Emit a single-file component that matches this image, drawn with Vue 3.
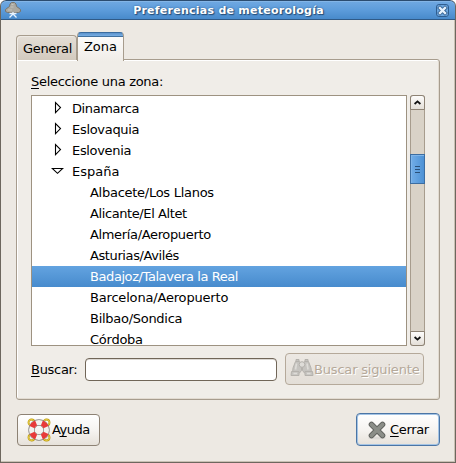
<script setup>
const countries = [
  { name: 'Dinamarca', open: false, tracking: -0.4 },
  { name: 'Eslovaquia', open: false, tracking: -0.3 },
  { name: 'Eslovenia', open: false, tracking: -0.33 },
  { name: 'España', open: true, tracking: 0 },
]
const stations = [
  { name: 'Albacete/Los Llanos', tracking: -0.27 },
  { name: 'Alicante/El Altet', tracking: -0.4 },
  { name: 'Almería/Aeropuerto', tracking: -0.35 },
  { name: 'Asturias/Avilés', tracking: -0.4 },
  { name: 'Badajoz/Talavera la Real', tracking: -0.42 },
  { name: 'Barcelona/Aeropuerto', tracking: -0.18 },
  { name: 'Bilbao/Sondica', tracking: -0.28 },
  { name: 'Córdoba', tracking: -0.25 },
]
const selected = 'Badajoz/Talavera la Real'
</script>

<template>
  <div class="window">
    <header class="titlebar">
      <svg class="app-icon" width="18" height="18" viewBox="0 0 18 18">
        <path d="M1.500 10.500v-2L4 6.500 5.500 5.500 6 3 7.500 1.500h3L12 3l.5 2.500L14 6.500l2.500 2v2l-2 1h-11z" fill="#aaa9a2" stroke="#77756f" />
        <path d="M7.500 3.500h2M6.500 6h3M4 9h4" stroke="#c4c3bd" />
        <path d="M9 11v3M5.500 12.500h7M9 13L5.500 16.500M9 13l3.500 3.500" fill="none" stroke="#e9f4ff" stroke-width="1.300" />
      </svg>
      <span class="title">Preferencias de meteorología</span>
      <svg class="close" width="15" height="15" viewBox="0 0 15 15">
        <rect x="1.500" y="1.500" width="12" height="12" rx="2.500" fill="#6ba5de" stroke="#2f5e90" />
        <path d="M5 5l5 5M10 5l-5 5" stroke="#315f8f" stroke-width="4" stroke-linecap="square" />
        <path d="M5 5l5 5M10 5l-5 5" stroke="#e6f2fd" stroke-width="2.400" stroke-linecap="square" />
      </svg>
    </header>

    <main class="body">
      <nav class="tabs">
        <div class="tab general"><span>General</span></div>
        <div class="tab zona"><span>Zona</span></div>
      </nav>
      <section class="panel">
        <label class="caption"><u>S</u>eleccione una zona:</label>
        <div class="picker">
          <div class="tree">
            <div v-for="c in countries" :key="c.name" class="row">
              <svg class="arrow" width="13" height="14" viewBox="0 0 13 14">
                <path v-if="c.open" d="M1.300 4.500h10.400L6.500 9.300z" fill="#fff" stroke="#000" stroke-width="1.100" />
                <path v-else d="M4.500 1.500v10.200l5-5.100z" fill="#fff" stroke="#000" stroke-width="1.100" />
              </svg>
              <span :style="{ letterSpacing: c.tracking + 'px' }">{{ c.name }}</span>
            </div>
            <div v-for="s in stations" :key="s.name" class="row station" :class="{ selected: s.name === selected }">
              <span :style="{ letterSpacing: s.tracking + 'px' }">{{ s.name }}</span>
            </div>
          </div>
          <div class="scrollbar">
            <div class="step up">
              <svg width="13" height="13" viewBox="0 0 13 13"><path d="M3.600 8L6.500 5.400 9.400 8" fill="none" stroke="#111" stroke-width="1.800" /></svg>
            </div>
            <div class="thumb"><i></i><i></i><i></i></div>
            <div class="step down">
              <svg width="13" height="13" viewBox="0 0 13 13"><path d="M3.600 5L6.500 7.600 9.400 5" fill="none" stroke="#111" stroke-width="1.800" /></svg>
            </div>
          </div>
        </div>
        <div class="search">
          <label class="search-label"><u>B</u>uscar:</label>
          <input class="entry" type="text" />
          <button class="button next" disabled>
            <svg width="24" height="24" viewBox="0 0 24 24">
              <g fill="#c6c4c0" stroke="#b5b2ad">
                <path d="M5.500 5.500h4l2 2.500v6.500l-2 2.500H2.500l.5-5z" />
                <path d="M18.500 5.500h-4l-2 2.500v6.500l2 2.500h7l-.5-5z" />
                <path d="M6 3.500h3v2H6zM15 3.500h3v2h-3z" />
                <path d="M1.500 15.500h7.500v4h-8zM15 15.500h7.500l.5 4h-8z" />
              </g>
              <path d="M6.500 7.500l-1 6M17 7.500l1 6M3.500 17.500h3.500M17 17.500h3.500" stroke="#dedcd8" stroke-width="1.600" />
              <circle cx="12" cy="8.500" r="2.800" fill="#dedcd8" stroke="#b5b2ad" />
            </svg>
            <span>Buscar <u>s</u>iguiente</span>
          </button>
        </div>
      </section>

      <footer class="actions">
        <button class="button help">
          <svg width="24" height="24" viewBox="0 0 24 24">
            <g fill="none" stroke="#b99500" stroke-width="1.800">
              <circle cx="4.500" cy="4.500" r="3" /><circle cx="19.500" cy="4.500" r="3" />
              <circle cx="4.500" cy="19.500" r="3" /><circle cx="19.500" cy="19.500" r="3" />
            </g>
            <g fill="none" stroke="#f5df60" stroke-width=".8">
              <circle cx="4.500" cy="4.500" r="3" /><circle cx="19.500" cy="4.500" r="3" />
              <circle cx="4.500" cy="19.500" r="3" /><circle cx="19.500" cy="19.500" r="3" />
            </g>
            <circle cx="12" cy="12" r="7.500" fill="none" stroke="#85837f" stroke-width="6.400" />
            <circle cx="12" cy="12" r="7.500" fill="none" stroke="#f2f1ee" stroke-width="5" />
            <circle cx="12" cy="12" r="7.500" fill="none" stroke="#e83a3a" stroke-width="5.400" pathLength="80" stroke-dasharray="10 10" stroke-dashoffset="-5" />
          </svg>
          <span>A<u>y</u>uda</span>
        </button>
        <button class="button quit">
          <svg width="24" height="24" viewBox="0 0 24 24">
            <ellipse cx="12" cy="20" rx="9" ry="1.500" fill="#dcdad6" />
            <path d="M6.500 6.500l11 11M17.500 6.500l-11 11" stroke="#60625e" stroke-width="5.600" stroke-linecap="round" />
            <path d="M6.500 6.500l11 11M17.500 6.500l-11 11" stroke="#8b8e88" stroke-width="3.800" stroke-linecap="round" />
          </svg>
          <span><u>C</u>errar</span>
        </button>
      </footer>
    </main>
  </div>
</template>

<style>
body {
  margin: 0;
  background: #fff;
}
</style>

<style scoped>
.window {
  box-sizing: border-box;
  width: 456px;
  height: 463px;
  overflow: hidden;
  border: 1px solid #6d675e;
  border-top: 0;
  border-radius: 6px 6px 0 0;
  background: #ede9e3;
  box-shadow: inset -1px -1px #c9c1b4;
  font: 13px/21px "DejaVu Sans", sans-serif;
  letter-spacing: -0.3px;
  color: #000;
}
.titlebar {
  box-sizing: border-box;
  display: flex;
  align-items: center;
  height: 20px;
  margin: 0 -1px;
  padding: 0 5px 0 3px;
  border: 1px solid #305a87;
  border-top-color: #2b4c70;
  border-radius: 6px 6px 0 0;
  background: linear-gradient(#70a9e2, #5d9cdb 50%, #488acb);
  box-shadow: inset 0 1px #83b5e7;
}
.title {
  flex: 1;
  padding-top: 1px;
  text-align: center;
  font-weight: bold;
  font-size: 11px;
  line-height: 17px;
  letter-spacing: 0.25px;
  color: #fff;
  text-shadow: 1px 1px 1px #244a73, 0 0 2px #315f91;
  white-space: nowrap;
}
.body {
  padding: 12px 15px 0;
}
.tabs {
  display: flex;
  align-items: flex-end;
  height: 28px;
}
.tab {
  box-sizing: border-box;
  border: 1px solid #a79c8d;
  border-bottom: 0;
  border-radius: 4px 4px 0 0;
  text-align: center;
}
.general {
  width: 61px;
  height: 25px;
  padding: 2px 0 0 2px;
  background: linear-gradient(#e4ded6, #d3cabe);
  box-shadow: inset 1px 1px #eeeae4;
}
.zona {
  position: relative;
  width: 47px;
  height: 29px;
  margin-bottom: -1px;
  padding-top: 3px;
  border-top-color: #3a6c9f;
  background: linear-gradient(#5c93cc, #78aee4 3px, #41719f 3px 4px, #fcfbfa 4px, #f0ede8);
  letter-spacing: 0;
}
.panel {
  box-sizing: border-box;
  width: 424px;
  height: 341px;
  margin-top: -1px;
  padding: 11px 14px 0;
  border: 1px solid #a79c8d;
  border-radius: 0 3px 3px 3px;
  background: #f0ede8;
  box-shadow: inset 1px 1px #fff, inset -1px -1px #e2dbd1;
}
u {
  text-decoration: underline;
  text-underline-offset: 2px;
  text-decoration-thickness: 1px;
  text-decoration-skip-ink: none;
}
.caption {
  display: block;
  height: 24px;
}
.picker {
  display: flex;
  gap: 3px;
  height: 251px;
}
.tree {
  box-sizing: border-box;
  width: 376px;
  padding-top: 2px;
  overflow: hidden;
  border: 1px solid #9d9281;
  background: #fff;
}
.row {
  display: flex;
  align-items: center;
  gap: 8px;
  height: 21px;
  padding-left: 19px;
  white-space: nowrap;
}
.arrow {
  margin-top: -2px;
}
.station {
  padding-left: 58px;
}
.selected {
  background: linear-gradient(#63a3e0, #478bcd);
  color: #fff;
}
.scrollbar {
  box-sizing: border-box;
  display: flex;
  flex-direction: column;
  width: 15px;
  border: solid #a79c8d;
  border-width: 0 1px;
  border-radius: 3px;
  background: #d9d2c7;
}
.step {
  box-sizing: border-box;
  display: flex;
  height: 15px;
  margin: 0 -1px;
  border: 1px solid #8d8274;
  background: linear-gradient(#fdfcfb, #e4dfd8);
}
.up {
  border-radius: 3px 3px 0 0;
}
.down {
  margin-top: auto;
  border-radius: 0 0 3px 3px;
}
.thumb {
  box-sizing: border-box;
  display: flex;
  flex-direction: column;
  align-items: center;
  justify-content: center;
  gap: 2px;
  height: 30px;
  margin: 44px -1px 0;
  border: 1px solid #3c6da1;
  background: linear-gradient(90deg, #72ade7, #4d91d5);
  box-shadow: inset 1px 1px #80b5e9;
}
.thumb i {
  width: 5px;
  height: 1px;
  background: #2b517a;
}
.search {
  display: flex;
  align-items: center;
  height: 32px;
  margin-top: 7px;
}
.search-label {
  width: 54px;
}
.entry {
  box-sizing: border-box;
  width: 192px;
  height: 23px;
  margin: 0 8px 0 0;
  padding: 0 4px;
  border: 1px solid #716658;
  border-radius: 4px;
  background: #fff;
  box-shadow: inset 0 1px #ddd9d4;
  font: inherit;
}
.button {
  box-sizing: border-box;
  display: flex;
  align-items: center;
  margin: 0;
  border: 1px solid #8d8274;
  border-radius: 4px;
  background: linear-gradient(#fff, #f6f4f1 50%, #e6e1da);
  font: inherit;
  letter-spacing: -0.35px;
  color: #000;
  white-space: nowrap;
}
.next {
  width: 139px;
  height: 32px;
  padding: 0 0 0 4px;
  border-color: #b5a99a;
  background: linear-gradient(#ece8e3, #e3ded7);
  color: #b5a99a;
  letter-spacing: -0.18px;
  text-shadow: 1px 1px #fff;
}
.next svg {
  margin-top: -2px;
}
.actions {
  display: flex;
  justify-content: space-between;
  align-items: center;
  margin: 13px 0 0 1px;
}
.help {
  width: 83px;
  height: 32px;
  padding: 0 0 0 9px;
  gap: 1px;
  letter-spacing: -0.5px;
}
.quit {
  width: 84px;
  height: 33px;
  padding: 0 0 0 8px;
  gap: 1px;
  border-color: #4b75a5;
  box-shadow: inset 0 0 0 1px #a4c4e5;
}
</style>
